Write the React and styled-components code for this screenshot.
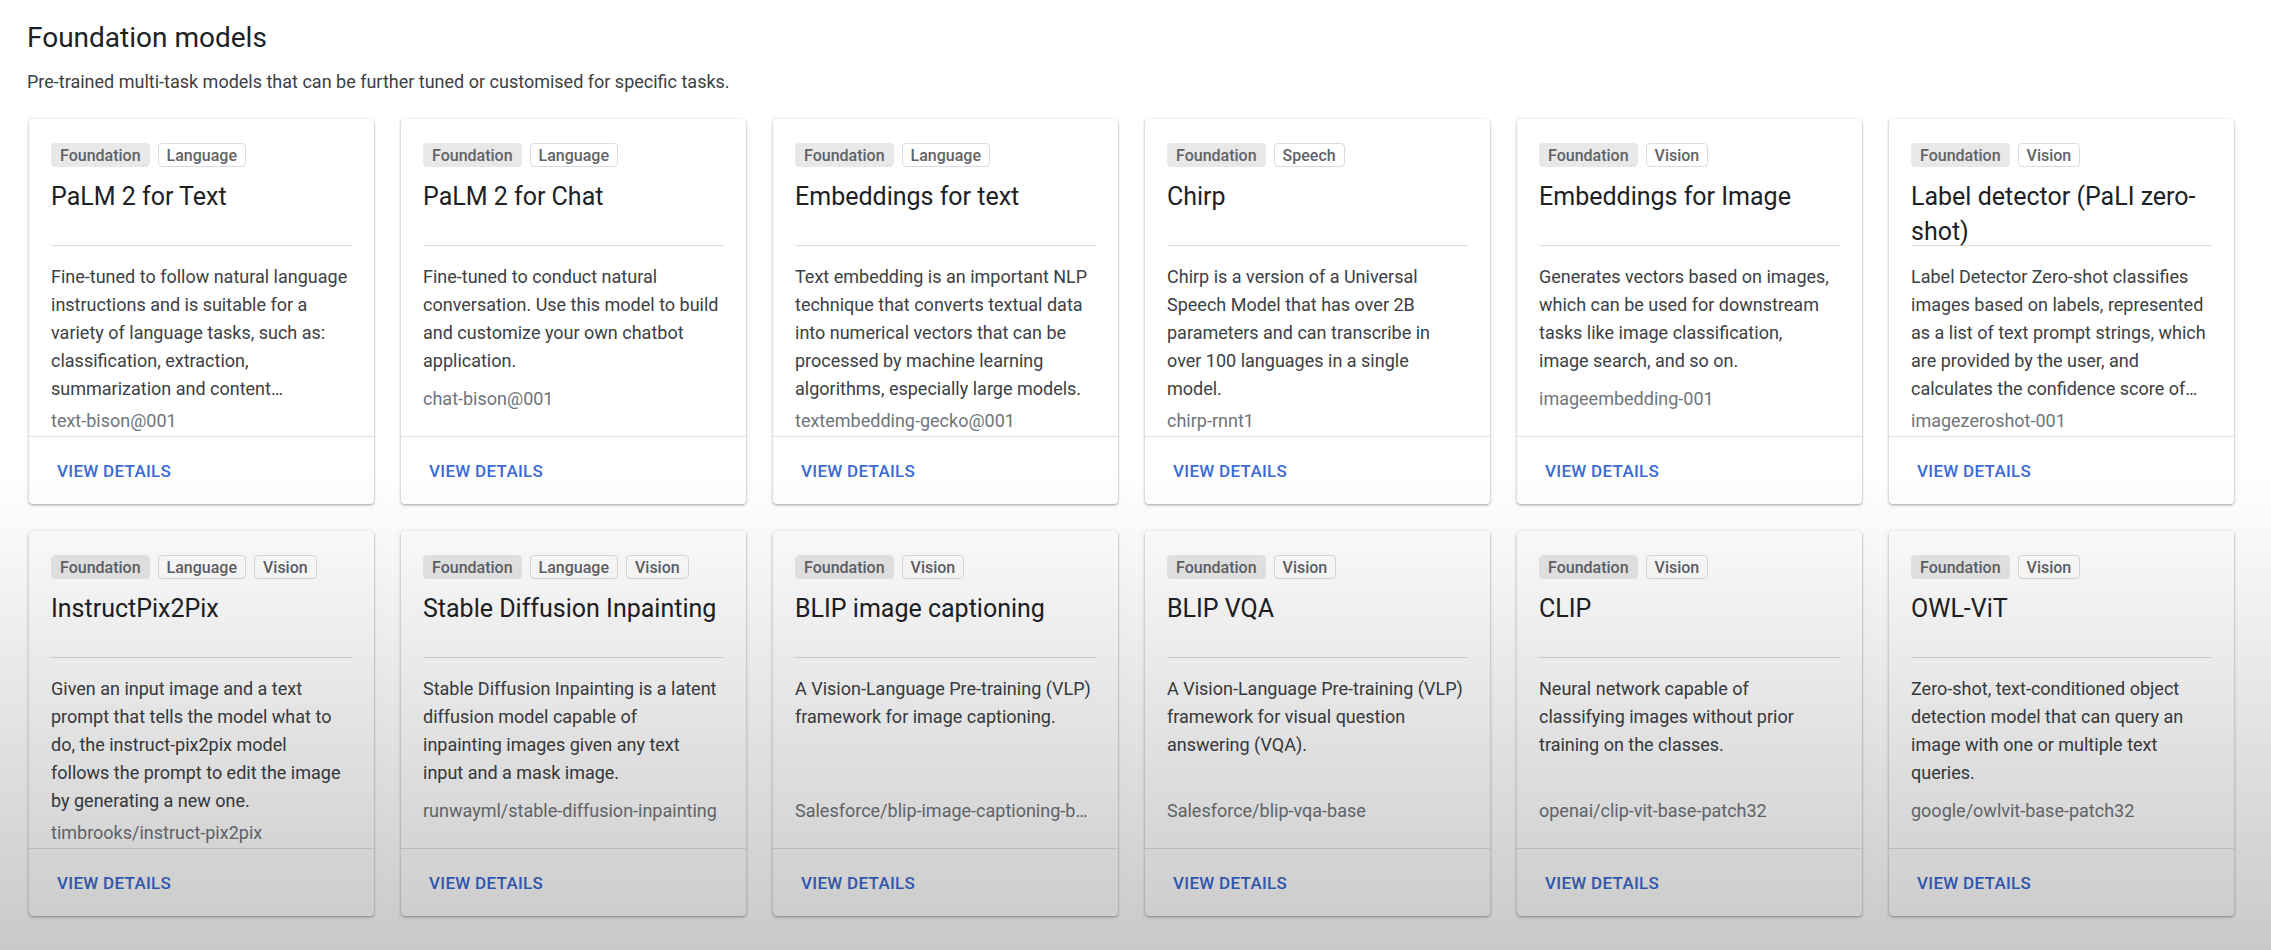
import React from 'react';
import styled, { createGlobalStyle } from 'styled-components';

const GlobalStyle = createGlobalStyle`
  body {
    margin: 0;
    background: #fff;
    font-family: Roboto, "Liberation Sans", Arial, sans-serif;
    color: #202124;
  }
`;

const Page = styled.main`
  padding: 18px 37px 40px 27px;
`;

const Heading = styled.h1`
  margin: 0;
  font-size: 28px;
  font-weight: 400;
  line-height: 40px;
  color: #202124;
`;

const Subtitle = styled.p`
  margin: 12px 0 0;
  font-size: 18px;
  line-height: 24px;
  color: #3c4043;
`;

const Grid = styled.div`
  display: grid;
  grid-template-columns: repeat(6, 345px);
  gap: 27px;
  margin: 25px 0 0 2px;
`;

const Card = styled.article`
  display: flex;
  flex-direction: column;
  height: 385px;
  background: #fff;
  border-radius: 4px;
  box-shadow: 0 1px 2px rgba(60, 64, 67, 0.3), 0 1px 3px 1px rgba(60, 64, 67, 0.15);
  overflow: hidden;
`;

const Body = styled.div`
  flex: 1;
  padding: 24px 22px 0;
  min-height: 0;
`;

const Chips = styled.div`
  display: flex;
  gap: 8px;
`;

const Chip = styled.span`
  display: inline-flex;
  align-items: center;
  height: 24px;
  padding: 0 8px;
  box-sizing: border-box;
  border-radius: 4px;
  font-size: 16px;
  font-weight: 500;
  color: #5f6368;
  background: ${(p) => (p.$filled ? '#e8e8e8' : '#fff')};
  border: 1px solid ${(p) => (p.$filled ? '#e8e8e8' : '#dadce0')};
`;

const Title = styled.h2`
  margin: 12px 0 0;
  height: 66px;
  border-bottom: 1px solid #dadce0;
  font-size: 25px;
  font-weight: 400;
  line-height: 35px;
  color: #202124;
`;

const Description = styled.p`
  margin: 17px 0 0;
  padding-right: 4px;
  min-height: 118px;
  font-size: 18px;
  line-height: 28px;
  color: #3c4043;
  display: -webkit-box;
  -webkit-line-clamp: 5;
  -webkit-box-orient: vertical;
  overflow: hidden;
`;

const ModelId = styled.div`
  margin-top: 7px;
  font-size: 18px;
  line-height: 22px;
  color: #70757a;
  white-space: nowrap;
  overflow: hidden;
  text-overflow: ellipsis;
`;

const Footer = styled.div`
  display: flex;
  align-items: center;
  height: 67px;
  padding-left: 22px;
  border-top: 1px solid #e0e0e0;
`;

const DetailsButton = styled.button`
  border: none;
  background: none;
  padding: 6px;
  font-family: inherit;
  font-size: 17px;
  font-weight: 500;
  letter-spacing: 0.3px;
  text-transform: uppercase;
  color: #3b6ad2;
  cursor: pointer;
`;

// the recording darkens towards the bottom of the frame
const Vignette = styled.div`
  position: fixed;
  inset: 0;
  pointer-events: none;
  background: linear-gradient(
    to bottom,
    rgba(0, 0, 0, 0) 0%,
    rgba(0, 0, 0, 0) 50%,
    rgba(0, 0, 0, 0.21) 100%
  );
`;

const models = [
  {
    tags: ['Language'],
    name: 'PaLM 2 for Text',
    text: 'Fine-tuned to follow natural language instructions and is suitable for a variety of language tasks, such as: classification, extraction, summarization and content generation.',
    id: 'text-bison@001',
  },
  {
    tags: ['Language'],
    name: 'PaLM 2 for Chat',
    text: 'Fine-tuned to conduct natural conversation. Use this model to build and customize your own chatbot application.',
    id: 'chat-bison@001',
  },
  {
    tags: ['Language'],
    name: 'Embeddings for text',
    text: 'Text embedding is an important NLP technique that converts textual data into numerical vectors that can be processed by machine learning algorithms, especially large models.',
    id: 'textembedding-gecko@001',
  },
  {
    tags: ['Speech'],
    name: 'Chirp',
    text: 'Chirp is a version of a Universal Speech Model that has over 2B parameters and can transcribe in over 100 languages in a single model.',
    id: 'chirp-rnnt1',
  },
  {
    tags: ['Vision'],
    name: 'Embeddings for Image',
    text: 'Generates vectors based on images, which can be used for downstream tasks like image classification, image search, and so on.',
    id: 'imageembedding-001',
  },
  {
    tags: ['Vision'],
    name: 'Label detector (PaLI zero-shot)',
    text: 'Label Detector Zero-shot classifies images based on labels, represented as a list of text prompt strings, which are provided by the user, and calculates the confidence score of each label.',
    id: 'imagezeroshot-001',
  },
  {
    tags: ['Language', 'Vision'],
    name: 'InstructPix2Pix',
    text: 'Given an input image and a text prompt that tells the model what to do, the instruct-pix2pix model follows the prompt to edit the image by generating a new one.',
    id: 'timbrooks/instruct-pix2pix',
  },
  {
    tags: ['Language', 'Vision'],
    name: 'Stable Diffusion Inpainting',
    text: 'Stable Diffusion Inpainting is a latent diffusion model capable of inpainting images given any text input and a mask image.',
    id: 'runwayml/stable-diffusion-inpainting',
  },
  {
    tags: ['Vision'],
    name: 'BLIP image captioning',
    text: 'A Vision-Language Pre-training (VLP) framework for image captioning.',
    id: 'Salesforce/blip-image-captioning-base',
  },
  {
    tags: ['Vision'],
    name: 'BLIP VQA',
    text: 'A Vision-Language Pre-training (VLP) framework for visual question answering (VQA).',
    id: 'Salesforce/blip-vqa-base',
  },
  {
    tags: ['Vision'],
    name: 'CLIP',
    text: 'Neural network capable of classifying images without prior training on the classes.',
    id: 'openai/clip-vit-base-patch32',
  },
  {
    tags: ['Vision'],
    name: 'OWL-ViT',
    text: 'Zero-shot, text-conditioned object detection model that can query an image with one or multiple text queries.',
    id: 'google/owlvit-base-patch32',
  },
];

const ModelCard = ({ model }) => (
  <Card>
    <Body>
      <Chips>
        <Chip $filled>Foundation</Chip>
        {model.tags.map((tag) => (
          <Chip key={tag}>{tag}</Chip>
        ))}
      </Chips>
      <Title>{model.name}</Title>
      <Description>{model.text}</Description>
      <ModelId>{model.id}</ModelId>
    </Body>
    <Footer>
      <DetailsButton>View details</DetailsButton>
    </Footer>
  </Card>
);

const App = () => (
  <>
    <GlobalStyle />
    <Page>
      <Heading>Foundation models</Heading>
      <Subtitle>
        Pre-trained multi-task models that can be further tuned or customised for specific tasks.
      </Subtitle>
      <Grid>
        {models.map((m) => (
          <ModelCard key={m.id} model={m} />
        ))}
      </Grid>
    </Page>
    <Vignette />
  </>
);

export default App;
